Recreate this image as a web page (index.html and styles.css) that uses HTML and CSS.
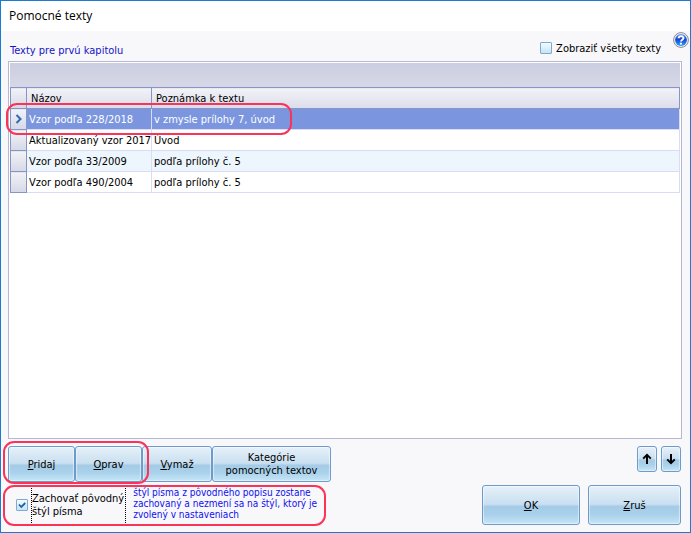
FILE: index.html
```html
<!DOCTYPE html>
<html lang="sk">
<head>
  <meta charset="UTF-8">
  <title>Pomocné texty</title>
  <link rel="stylesheet" href="styles.css">
</head>
<body>
  <div class="window">
    <header class="titlebar">Pomocné texty</header>

    <!-- Heading, filter and help -->
    <div class="toolbar">
      <h1>Texty pre prvú kapitolu</h1>
      <label class="show-all"><input type="checkbox"> Zobraziť všetky texty</label>
      <button class="help" type="button" aria-label="Pomocník">
        <svg width="16" height="16" viewBox="0 0 16 16">
          <defs>
            <linearGradient id="helpFill" x1="0" y1="0" x2="0" y2="1">
              <stop offset="0" stop-color="#6f9cf0"/>
              <stop offset="0.45" stop-color="#1746d0"/>
              <stop offset="1" stop-color="#2ba0ff"/>
            </linearGradient>
          </defs>
          <circle cx="8" cy="8" r="7.4" fill="#eef0f4" stroke="#8b8d96" stroke-width="1"/>
          <circle cx="8" cy="8" r="5.9" fill="url(#helpFill)"/>
          <path d="M5.6 6.3C5.8 3.6 10.5 3.5 10.5 6.1C10.5 7.7 8.1 7.7 8 9.5" fill="none" stroke="#fff" stroke-width="1.8"/>
          <circle cx="7.9" cy="11.7" r="1.1" fill="#fff"/>
        </svg>
      </button>
    </div>

    <!-- Texts -->
    <main class="grid">
      <div class="group-band"></div>
      <table>
        <thead>
          <tr>
            <th class="marker"></th>
            <th class="name">Názov</th>
            <th>Poznámka k textu</th>
          </tr>
        </thead>
        <tbody>
          <tr class="selected">
            <td class="marker">
              <svg width="8" height="10" viewBox="0 0 8 10"><path d="M1.5 1L5.5 5L1.5 9" fill="none" stroke="#2f6bb5" stroke-width="2"/></svg>
              <span class="ring ring-row"></span>
            </td>
            <td>Vzor podľa 228/2018</td>
            <td>v zmysle prílohy 7, úvod</td>
          </tr>
          <tr>
            <td class="marker"></td>
            <td>Aktualizovaný vzor 2017</td>
            <td>Úvod</td>
          </tr>
          <tr class="even">
            <td class="marker"></td>
            <td>Vzor podľa 33/2009</td>
            <td>podľa prílohy č. 5</td>
          </tr>
          <tr>
            <td class="marker"></td>
            <td>Vzor podľa 490/2004</td>
            <td>podľa prílohy č. 5</td>
          </tr>
        </tbody>
      </table>
    </main>

    <!-- Buttons -->
    <footer class="footer">
      <div class="actions">
        <div class="pair">
          <button class="btn" type="button"><u>P</u>ridaj</button>
          <button class="btn" type="button"><u>O</u>prav</button>
          <span class="ring ring-pair"></span>
        </div>
        <button class="btn delete" type="button"><u>V</u>ymaž</button>
        <button class="btn categories" type="button">Kategórie<br>pomocných textov</button>
        <div class="arrows">
          <button class="btn" type="button" aria-label="Hore">
            <svg width="10" height="12" viewBox="0 0 10 12"><path d="M5 11V2M1.2 5.6L5 1.8L8.8 5.6" fill="none" stroke="#000" stroke-width="2"/></svg>
          </button>
          <button class="btn" type="button" aria-label="Dole">
            <svg width="10" height="12" viewBox="0 0 10 12"><path d="M5 1V10M1.2 6.4L5 10.2L8.8 6.4" fill="none" stroke="#000" stroke-width="2"/></svg>
          </button>
        </div>
      </div>
      <div class="confirm">
        <div class="keep">
          <input type="checkbox" id="keepStyle" checked>
          <label for="keepStyle">Zachovať pôvodný<br>štýl písma</label>
          <p>štýl písma z pôvodného popisu zostane<br>zachovaný a nezmení sa na štýl, ktorý je<br>zvolený v nastaveniach</p>
          <span class="ring ring-keep"></span>
        </div>
        <button class="btn ok" type="button"><u>O</u>K</button>
        <button class="btn cancel" type="button"><u>Z</u>ruš</button>
      </div>
    </footer>
  </div>
</body>
</html>
```

FILE: styles.css
```css
* {
  box-sizing: border-box;
}

body {
  margin: 0;
  font-family: "DejaVu Sans Condensed", "DejaVu Sans", sans-serif;
  font-size: 11px;
  line-height: 13px;
  color: #000;
}

.window {
  display: flex;
  flex-direction: column;
  min-height: 100vh;
  background-color: #f8f8fb;
  border: 1px solid #1a7bd0;
}

.titlebar {
  height: 30px;
  padding: 0 8px;
  background-color: #fff;
  font-family: "Open Sans", "Noto Sans", sans-serif;
  font-size: 12px;
  line-height: 30px;
}

/* Heading row */
.toolbar {
  display: flex;
  align-items: center;
  height: 30px;
  padding-left: 9px;
}

.toolbar h1 {
  flex: 1;
  margin: 9px 0 0;
  font-size: 11px;
  font-weight: normal;
  color: #1414c8;
}

.show-all {
  display: flex;
  align-items: center;
  gap: 4px;
  margin-top: 4px;
}

input[type="checkbox"] {
  appearance: none;
  flex: none;
  width: 12px;
  height: 12px;
  margin: 0;
  border: 1px solid #7fabd3;
  border-radius: 1px;
  background: linear-gradient(#f4fbff, #c5e4f5);
}

input[type="checkbox"]:checked {
  background: url("data:image/svg+xml,%3Csvg xmlns='http://www.w3.org/2000/svg' viewBox='0 0 10 10'%3E%3Cpath d='M2 4.5L4.3 7L8.3 3' fill='none' stroke='%232460a4' stroke-width='1.8'/%3E%3C/svg%3E"), linear-gradient(#f4fbff, #c5e4f5);
}

.help {
  width: 16px;
  height: 16px;
  margin: 0 1px 12px 12px;
  padding: 0;
  border: none;
  background: none;
}

.help svg {
  display: block;
}

/* Grid */
.grid {
  flex: 1;
  margin: 0 8px 0 7px;
  padding: 1px;
  border: 1px solid #b5b8d3;
  background-color: #fff;
}

.group-band {
  height: 24px;
  background: linear-gradient(#cbcedf, #d6d8e6);
}

table {
  width: 100%;
  table-layout: fixed;
  border-collapse: collapse;
}

th,
td {
  height: 21px;
  padding: 0 2px;
  border: 1px solid #d9dcf2;
  text-align: left;
  font-weight: normal;
  white-space: nowrap;
}

th {
  padding: 0 4px;
  border-color: #8795c4;
  background: linear-gradient(#f2f2f7, #dbddea);
}

.name {
  width: 125px;
}

.marker {
  position: relative;
  width: 16px;
  padding: 0;
  border-color: #8795c4;
  background: linear-gradient(#f2f2f7, #d5d8e6);
  text-align: center;
}

.marker svg {
  display: block;
  margin: auto;
}

.selected td:not(.marker) {
  background-color: #7b96df;
  color: #fff;
}

.even td:not(.marker) {
  background-color: #eef6fd;
}

/* Buttons */
.footer {
  display: flex;
  flex-direction: column;
  gap: 3px;
  padding: 7px 9px 7px 7px;
}

.actions,
.pair,
.arrows,
.confirm {
  display: flex;
}

.btn {
  padding: 0;
  border: 1px solid #6d9bcb;
  border-radius: 3px;
  background: linear-gradient(#e6f1f9 0%, #c9dff0 48%, #a5cbe6 54%, #a9d1eb 75%, #c5e5f6 100%);
  box-shadow: inset 0 0 1px 1px rgba(255, 255, 255, 0.5);
  font: inherit;
  color: #000;
}

.actions .btn {
  height: 36px;
}

.pair {
  position: relative;
}

.pair .btn {
  width: 67px;
}

.delete {
  width: 70px;
}

.categories {
  width: 119px;
}

.arrows {
  gap: 4px;
  margin-left: auto;
}

.arrows .btn {
  display: flex;
  align-items: center;
  justify-content: center;
  width: 20px;
  height: 26px;
}

.confirm {
  gap: 8px;
}

.keep {
  position: relative;
  display: flex;
  flex: 1;
  align-items: center;
  padding-left: 8px;
}

.keep label {
  margin-left: 4px;
  padding: 5px 1px 6px 0;
  outline: 1px dotted #000;
}

.keep p {
  margin: 0 0 3px 8px;
  font-size: 10px;
  line-height: 11px;
  white-space: nowrap;
  color: #1010f0;
}

.confirm .btn {
  height: 40px;
}

.ok {
  width: 98px;
}

.cancel {
  width: 93px;
}

/* Red highlight outlines */
.ring {
  position: absolute;
  z-index: 1;
  border: 2px solid #fb3358;
  border-radius: 11px;
  pointer-events: none;
}

.ring-row {
  top: -6px;
  left: -5px;
  width: 286px;
  height: 32px;
}

.ring-pair {
  top: -5px;
  left: -5px;
  width: 146px;
  height: 43px;
}

.ring-keep {
  top: 0;
  left: -5px;
  width: 323px;
  height: 41px;
}
```
